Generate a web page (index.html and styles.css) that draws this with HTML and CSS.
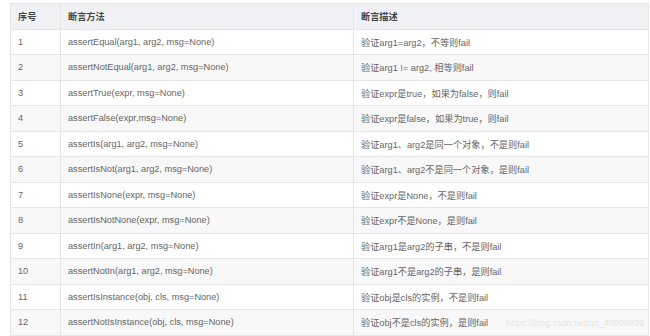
FILE: index.html
```html
<!DOCTYPE html>
<html>
<head>
<meta charset="utf-8">
<link rel="stylesheet" href="styles.css">
</head>
<body>
<div class="wrap">
<table class="tbl">
<thead>
<tr><th class="c1">序号</th><th class="c2">断言方法</th><th class="c3">断言描述</th></tr>
</thead>
<tbody>
<tr><td>1</td><td>assertEqual(arg1, arg2, msg=None)</td><td>验证arg1=arg2，不等则fail</td></tr>
<tr><td>2</td><td>assertNotEqual(arg1, arg2, msg=None)</td><td>验证arg1 != arg2, 相等则fail</td></tr>
<tr><td>3</td><td>assertTrue(expr, msg=None)</td><td>验证expr是true，如果为false，则fail</td></tr>
<tr><td>4</td><td>assertFalse(expr,msg=None)</td><td>验证expr是false，如果为true，则fail</td></tr>
<tr><td>5</td><td>assertIs(arg1, arg2, msg=None)</td><td>验证arg1、arg2是同一个对象，不是则fail</td></tr>
<tr><td>6</td><td>assertIsNot(arg1, arg2, msg=None)</td><td>验证arg1、arg2不是同一个对象，是则fail</td></tr>
<tr><td>7</td><td>assertIsNone(expr, msg=None)</td><td>验证expr是None，不是则fail</td></tr>
<tr><td>8</td><td>assertIsNotNone(expr, msg=None)</td><td>验证expr不是None，是则fail</td></tr>
<tr><td>9</td><td>assertIn(arg1, arg2, msg=None)</td><td>验证arg1是arg2的子串，不是则fail</td></tr>
<tr><td>10</td><td>assertNotIn(arg1, arg2, msg=None)</td><td>验证arg1不是arg2的子串，是则fail</td></tr>
<tr><td>11</td><td>assertIsInstance(obj, cls, msg=None)</td><td>验证obj是cls的实例，不是则fail</td></tr>
<tr><td>12</td><td>assertNotIsInstance(obj, cls, msg=None)</td><td>验证obj不是cls的实例，是则fail</td></tr>
</tbody>
</table>
<div class="wm">https://blog.csdn.net/qq_40999839</div>
</div>
</body>
</html>
```
FILE: styles.css
```css
html, body {
  margin: 0;
  padding: 0;
  background: #ffffff;
}
.wrap {
  position: relative;
  padding: 3px 1px 0 10px;
}
.tbl {
  border-collapse: collapse;
  width: 639px;
  table-layout: fixed;
  font-family: "Liberation Sans", Arial, "Noto Sans CJK SC", sans-serif;
  font-size: 9.2px;
  color: #666666;
}
.tbl th, .tbl td {
  border: 1px solid #e6e6e6;
  height: 24.5px;
  padding: 0 0 0 7px;
  text-align: left;
  vertical-align: middle;
  white-space: nowrap;
}
.tbl th {
  background: #eff1f4;
  color: #444444;
  font-weight: bold;
}
.c1 { width: 42px; }
.c2 { width: 285px; }
.tbl tbody tr:nth-child(even) td {
  background: #f8f8f8;
}
.wm {
  position: absolute;
  right: 6px;
  top: 318px;
  font-family: "Liberation Sans", Arial, sans-serif;
  font-size: 9px;
  color: rgba(200, 200, 200, 0.45);
}
```
